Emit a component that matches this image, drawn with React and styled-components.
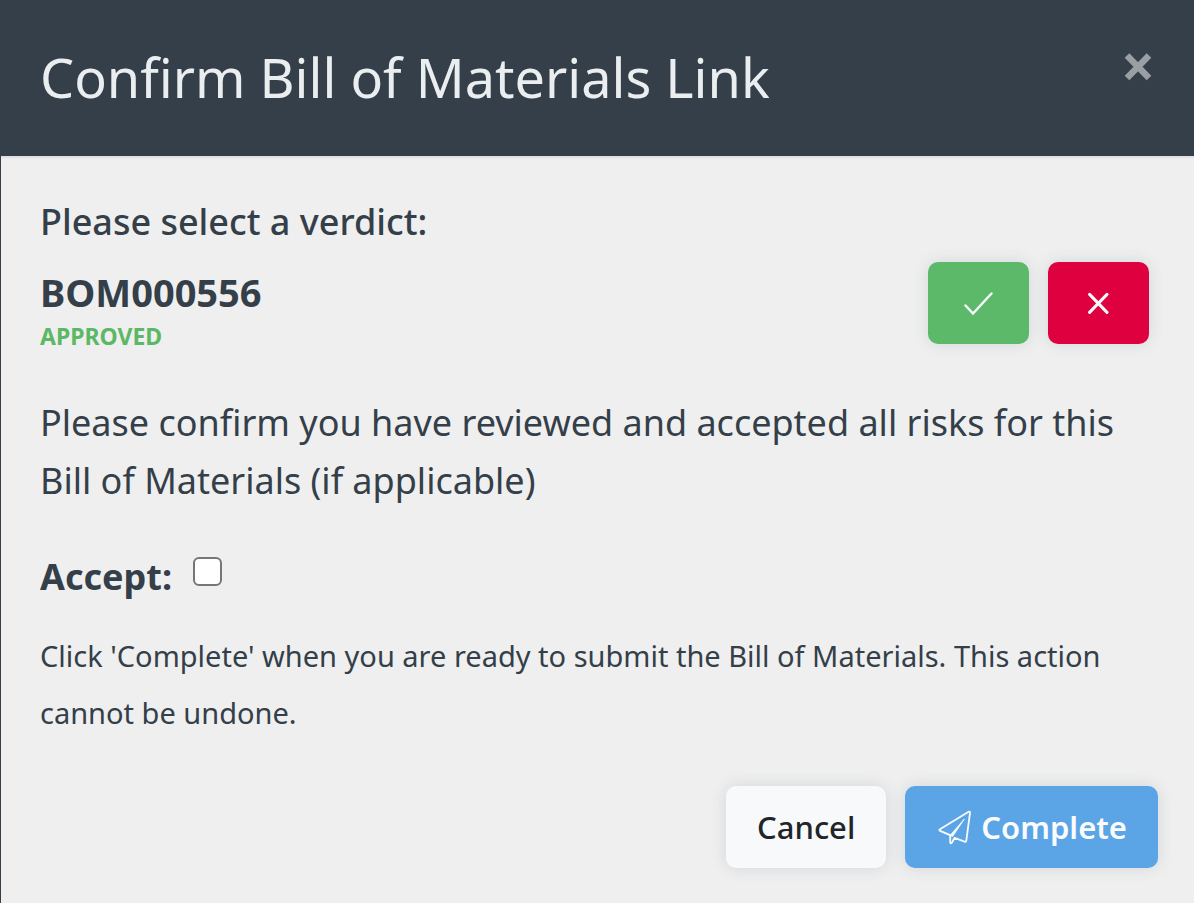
import styled, { createGlobalStyle } from "styled-components";

const GlobalStyle = createGlobalStyle`
  * {
    box-sizing: border-box;
  }

  body {
    margin: 0;
    background-color: #efefef;
    color: #343f49;
    font-family: "Segoe UI", "Noto Sans", "Open Sans", sans-serif;
  }
`;

const Modal = styled.div`
  display: flex;
  flex-direction: column;
  min-height: 100vh;
  border-left: 1px solid #343f49;
`;

const Header = styled.header`
  display: flex;
  justify-content: space-between;
  align-items: flex-start;
  padding: 37px 40px 39px 39px;
  background-color: #343f49;
`;

const Title = styled.h1`
  margin: 0;
  font-size: 54px;
  line-height: 80px;
  font-weight: 400;
  color: #ebeef0;
`;

const CloseButton = styled.button`
  display: flex;
  margin-top: 14px;
  padding: 0;
  border: none;
  background: none;
  color: #9a9fa4;
  cursor: pointer;
`;

const Body = styled.main`
  display: flex;
  flex-direction: column;
  padding: 36px 36px 35px 39px;
  border-top: 2px solid #dee2e6;
`;

const Heading = styled.h2`
  margin: 0;
  font-size: 36px;
  line-height: 56px;
  font-weight: 500;
`;

const VerdictRow = styled.div`
  display: flex;
  justify-content: space-between;
  align-items: flex-start;
  margin-top: 12px;
  padding-right: 9px;
`;

const BomNumber = styled.div`
  margin-top: 4px;
  font-size: 38px;
  line-height: 52px;
  font-weight: 700;
`;

const Status = styled.div`
  font-size: 23px;
  line-height: 36px;
  font-weight: 700;
  color: #5cb865;
`;

const ButtonGroup = styled.div`
  display: flex;
  gap: 19px;
`;

const Button = styled.button`
  display: flex;
  justify-content: center;
  align-items: center;
  gap: 10px;
  height: 82px;
  padding: 0 31px;
  border: none;
  border-radius: 10px;
  box-shadow: 0 0 16px rgba(52, 73, 94, 0.14);
  background-color: ${({ $color }) => $color || "#f8f9fb"};
  color: ${({ $color }) => ($color ? "#fafbfc" : "#212529")};
  font-family: inherit;
  font-size: 31px;
  font-weight: ${({ $color }) => ($color ? 600 : 500)};
  cursor: pointer;
`;

const VerdictButton = styled(Button)`
  width: 101px;
`;

const Message = styled.p`
  margin: 40px 0 0;
  font-size: 36px;
  line-height: 58px;
`;

const AcceptRow = styled.div`
  display: flex;
  align-items: center;
  gap: 21px;
  margin-top: 38px;
`;

const AcceptLabel = styled.label`
  font-size: 36px;
  line-height: 58px;
  font-weight: 700;
`;

const Checkbox = styled.input`
  appearance: none;
  width: 29px;
  height: 29px;
  margin: 0 0 12px;
  border: 2px solid #767676;
  border-radius: 6px;
  background-color: #fff;

  &:checked {
    background-color: #5ba4e6;
  }
`;

const Note = styled.p`
  margin: 21px 0 0;
  font-size: 29px;
  line-height: 57px;
`;

const Footer = styled.footer`
  display: flex;
  justify-content: flex-end;
  gap: 19px;
  margin-top: 45px;
`;

function App() {
  return (
    <>
      <GlobalStyle />
      <Modal>
        <Header>
          <Title>Confirm Bill of Materials Link</Title>
          <CloseButton aria-label="Close">
            <svg width="30" height="30" viewBox="0 0 30 30">
              <path
                d="M3 4.5 25 27M25 4.5 3 27"
                stroke="currentColor"
                strokeWidth="6.5"
              />
            </svg>
          </CloseButton>
        </Header>

        <Body>
          <Heading>Please select a verdict:</Heading>
          <VerdictRow>
            <div>
              <BomNumber>BOM000556</BomNumber>
              <Status>APPROVED</Status>
            </div>
            <ButtonGroup>
              <VerdictButton $color="#5cb96a" aria-label="Approve">
                <svg width="30" height="24" viewBox="0 0 30 24" fill="none">
                  <path
                    d="M1.5 14.5 9 22.5 27.5 2.5"
                    stroke="currentColor"
                    strokeWidth="2.4"
                    strokeLinecap="round"
                  />
                </svg>
              </VerdictButton>
              <VerdictButton $color="#df0040" aria-label="Reject">
                <svg width="22" height="22" viewBox="0 0 22 22">
                  <path
                    d="M1.6 2.4 19 20.4M19 2.4 1.6 20.4"
                    stroke="currentColor"
                    strokeWidth="3"
                    strokeLinecap="round"
                  />
                </svg>
              </VerdictButton>
            </ButtonGroup>
          </VerdictRow>

          <Message>
            Please confirm you have reviewed and accepted all risks for this
            Bill of Materials (if applicable)
          </Message>

          <AcceptRow>
            <AcceptLabel htmlFor="accept">Accept:</AcceptLabel>
            <Checkbox id="accept" type="checkbox" />
          </AcceptRow>

          <Note>
            Click 'Complete' when you are ready to submit the Bill of
            Materials. This action cannot be undone.
          </Note>

          <Footer>
            <Button>Cancel</Button>
            <Button $color="#5ba4e6">
              <svg width="35" height="36" viewBox="0 0 35 36" fill="none">
                <g
                  stroke="currentColor"
                  strokeWidth="1.8"
                  strokeLinejoin="round"
                  strokeLinecap="round"
                >
                  <path d="M32.6 2.8Q34.2 2 34 3.8L30.3 31.6Q30 33.2 28.6 32.6L18.6 28.8 16 33.6Q14.2 35.4 14.2 33V26.2L4 21.8Q2.6 21 4 20.2Z" />
                  <path
                    d="M14.2 26.2 28.4 10 16.8 27.2Z"
                    fill="currentColor"
                    strokeWidth="0.8"
                  />
                </g>
              </svg>
              Complete
            </Button>
          </Footer>
        </Body>
      </Modal>
    </>
  );
}

export default App;
